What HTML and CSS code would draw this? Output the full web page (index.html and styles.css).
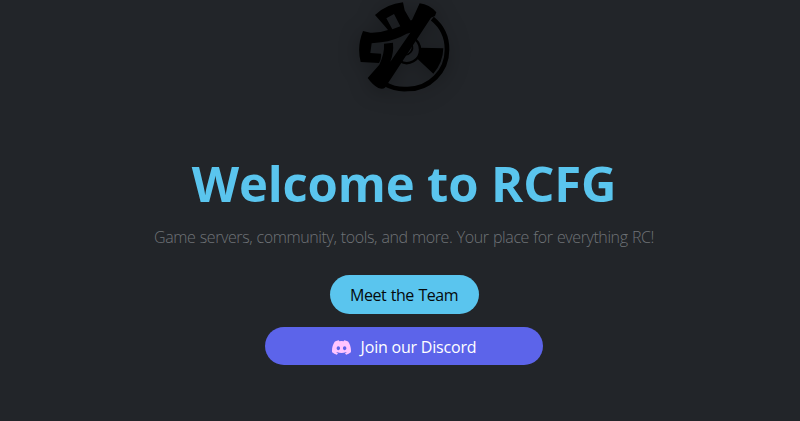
FILE: index.html
```html
<!DOCTYPE html>
<html lang="en">
<head>
<meta charset="utf-8">
<title>RCFG</title>
<link rel="stylesheet" href="styles.css">
</head>
<body>
<main class="hero">
  <svg class="logo" viewBox="0 0 390 330" aria-hidden="true">
    <g fill="none" stroke="#000">
      <path d="M277 56A118 118 0 0 1 321 149A118 118 0 0 1 203 267A118 118 0 0 1 135 252" stroke-width="14"/>
      <path d="M220 114A40 40 0 0 1 240 149A40 40 0 0 1 180 184" stroke-width="7"/>
      <path d="M215 132A23 23 0 0 1 188 164" stroke-width="5"/>
      <path d="M207 141Q208 153 197 155" stroke-width="4"/>
    </g>
    <path d="M239 10Q268 13 289 37L285 48L273 53L135 263Q128 269 115 264Q98 255 83 234L118 194Q134 160 132 131L159 128Q162 157 151 185L211 98L190 68L216 60Z"/>
    <path fill-rule="evenodd" d="M105 45Q140 12 189 7L194 31L216 69L211 98L200 101Q166 121 123 127L95 130L91 159L123 161Q125 176 117 189L62 186Q50 140 69 93L91 98Q120 99 144 90L132 76ZM139 55L162 42L181 79L157 88Z"/>
    <path d="M242 143L310 145Q309 188 280 221L232 176Q242 162 242 143Z"/>
  </svg>
  <h1 class="title">Welcome to RCFG</h1>
  <p class="lead">Game servers, community, tools, and more. Your place for everything RC!</p>
  <a class="btn btn-team"><span class="team-label">Meet the Team</span></a>
  <a class="btn btn-discord">
    <svg class="discord" viewBox="0 0 16 16" aria-hidden="true"><path d="M13.545 2.907a13.2 13.2 0 0 0-3.257-1.011.05.05 0 0 0-.052.025c-.141.25-.297.577-.406.833a12.2 12.2 0 0 0-3.658 0 8 8 0 0 0-.412-.833.05.05 0 0 0-.052-.025c-1.125.194-2.22.534-3.257 1.011a.04.04 0 0 0-.021.018C.356 6.024-.213 9.047.066 12.032q.003.022.021.037a13.3 13.3 0 0 0 3.995 2.02.05.05 0 0 0 .056-.019q.463-.63.818-1.329a.05.05 0 0 0-.01-.059l-.018-.011a9 9 0 0 1-1.248-.595.05.05 0 0 1-.02-.066l.015-.019q.127-.095.248-.195a.05.05 0 0 1 .051-.007c2.619 1.196 5.454 1.196 8.041 0a.05.05 0 0 1 .053.007q.121.1.248.195a.05.05 0 0 1-.004.085 8 8 0 0 1-1.249.594.05.05 0 0 0-.03.03.05.05 0 0 0 .003.041c.24.465.515.909.817 1.329a.05.05 0 0 0 .056.019 13.2 13.2 0 0 0 4.001-2.02.05.05 0 0 0 .021-.037c.334-3.451-.559-6.449-2.366-9.106a.03.03 0 0 0-.02-.019m-8.198 7.307c-.789 0-1.438-.724-1.438-1.612s.637-1.613 1.438-1.613c.807 0 1.45.73 1.438 1.613 0 .888-.637 1.612-1.438 1.612m5.316 0c-.788 0-1.438-.724-1.438-1.612s.637-1.613 1.438-1.613c.807 0 1.451.73 1.438 1.613 0 .888-.631 1.612-1.438 1.612"/></svg>
    <span class="discord-label">Join our Discord</span>
  </a>
</main>
</body>
</html>
```
FILE: styles.css
```css
* { box-sizing: border-box; }
body {
  margin: 0;
  background: #222529;
  font-family: "Open Sans", "Noto Sans", sans-serif;
}
.hero {
  display: flex;
  flex-direction: column;
  align-items: center;
  height: 421px;
  padding-left: 8px;
  overflow: hidden;
}
.logo {
  width: 130px;
  height: 110px;
  margin-left: 2px;
  flex: none;
  overflow: visible;
  filter: drop-shadow(0 3px 10px rgba(0, 0, 0, .3));
}
.title {
  margin: 43px 0 0;
  font-size: 49px;
  line-height: 60px;
  font-weight: 700;
  letter-spacing: -.15px;
  color: #5ac5ee;
  white-space: nowrap;
}
.lead {
  margin: 12px 0 0;
  font-size: 16px;
  line-height: 24px;
  font-weight: 300;
  letter-spacing: -.4px;
  word-spacing: .6px;
  color: #6f7377;
  white-space: nowrap;
}
.btn {
  display: flex;
  align-items: center;
  justify-content: center;
  font-size: 16px;
  line-height: 24px;
  border-radius: 20px;
  white-space: nowrap;
}
.btn-team {
  width: 149px;
  height: 39px;
  margin-top: 26px;
  letter-spacing: -.5px;
  word-spacing: 1px;
  background: #5ac5ee;
  color: #050a0c;
}
.btn-discord {
  width: 278px;
  height: 38px;
  margin-top: 13px;
  padding-top: 1px;
  gap: 10px;
  letter-spacing: -.2px;
  background: #5c64ea;
  color: #fff;
}
.discord {
  width: 19px;
  height: 19px;
  margin-top: 2px;
  fill: #ffc4ff;
}
```
